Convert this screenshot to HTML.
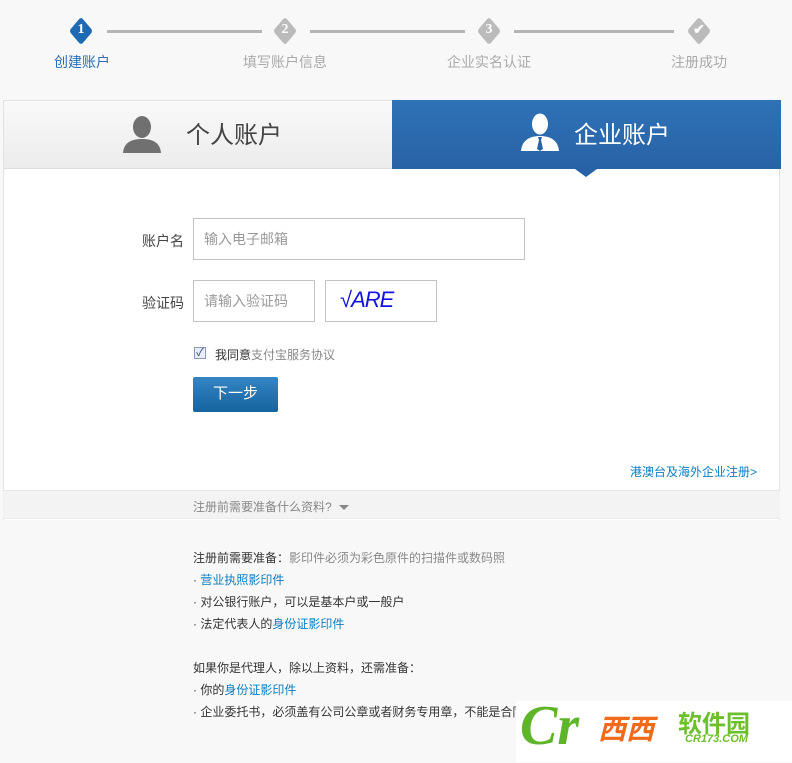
<!DOCTYPE html>
<html><head><meta charset="utf-8"><style>
*{margin:0;padding:0;box-sizing:border-box}
body{width:792px;height:762px;background:#f8f8f8;font-family:"Liberation Sans","Noto Sans CJK SC",sans-serif;position:relative;overflow:hidden;font-size:12px;color:#333}
.abs{position:absolute}
.line{position:absolute;top:30px;height:3px;background:#b5b5b5}
.dia{position:absolute;top:17px;width:28px;height:28px;}
.dia div{position:absolute;left:4px;top:4px;width:20px;height:20px;transform:scaleX(0.85) rotate(45deg);border-radius:3px;background:#bbb}
.dia span{position:absolute;left:0;top:5px;width:28px;text-align:center;color:#fff;font:bold 14px "Liberation Serif",serif}
.lbl{position:absolute;top:52px;font-size:14px;color:#aaa}
.card{position:absolute;left:3px;top:100px;width:777px;height:662px;background:#fff;border:1px solid #e2e2e2;border-bottom:none}
.inp{position:absolute;border:1px solid #c3c3c3;background:#fff;color:#999;font-size:14px;padding-left:10px}
a{color:#0a7cc2;text-decoration:none}
.req div{height:22px;line-height:22px;font-size:12px}
</style></head><body>
<div class="line" style="left:107px;width:155px"></div>
<div class="line" style="left:310px;width:155px"></div>
<div class="line" style="left:514px;width:160px"></div>
<div class="dia" style="left:67px"><div style="background:#1f6bb3"></div><span>1</span></div>
<div class="dia" style="left:271px"><div></div><span>2</span></div>
<div class="dia" style="left:475px"><div></div><span>3</span></div>
<div class="dia" style="left:685px"><div></div><span>✔</span></div>
<div class="lbl" style="left:54px;color:#2a6fb5">创建账户</div>
<div class="lbl" style="left:243px">填写账户信息</div>
<div class="lbl" style="left:447px">企业实名认证</div>
<div class="lbl" style="left:671px">注册成功</div>

<div class="card">
 <div class="abs" style="left:0;top:0;width:389px;height:68px;background:linear-gradient(#f9f9f9,#ececec);border-bottom:1px solid #ddd"></div>
 <svg class="abs" style="left:118px;top:14px" width="40" height="38" viewBox="0 0 40 38"><ellipse cx="20" cy="12" rx="9" ry="11" fill="#707070"/><path d="M1 38 C2 27 10 24 20 24 C30 24 38 27 39 38Z" fill="#707070"/></svg>
 <div class="abs" style="left:182px;top:14px;font-size:24px;color:#444">个人账户</div>
 <div class="abs" style="left:388px;top:-1px;width:389px;height:69px;background:linear-gradient(#2f72b7,#2862a5)"></div>
 <svg class="abs" style="left:516px;top:12px" width="40" height="38" viewBox="0 0 40 38"><ellipse cx="20" cy="11" rx="8" ry="10.5" fill="#fff"/><path d="M1 38 C2 27 10 23 20 23 C30 23 38 27 39 38Z" fill="#fff"/><path d="M18 24 L22 24 L21 27 L23 36 L20 38 L17 36 L19 27Z" fill="#2862a5"/></svg>
 <div class="abs" style="left:570px;top:14px;font-size:24px;color:#fff">企业账户</div>
 <div class="abs" style="left:571px;top:68px;width:0;height:0;border-left:11px solid transparent;border-right:11px solid transparent;border-top:8px solid #2862a5"></div>

 <div class="abs" style="left:138px;top:130px;font-size:14px;color:#444">账户名</div>
 <div class="inp" style="left:189px;top:117px;width:332px;height:42px;line-height:40px">输入电子邮箱</div>
 <div class="abs" style="left:138px;top:192px;font-size:14px;color:#444">验证码</div>
 <div class="inp" style="left:189px;top:179px;width:122px;height:42px;line-height:40px">请输入验证码</div>
 <div class="inp" style="left:321px;top:179px;width:112px;height:42px;padding:0"><span style="position:absolute;left:14px;top:6px;color:#1414e0;font:italic 22px 'Liberation Sans',sans-serif;letter-spacing:-1px">√ARE</span></div>
 <div class="abs" style="left:190px;top:246px;width:12px;height:12px;border:1px solid #8a9ab8;background:#e8ecf3;color:#2a3f8f;font-size:11px;line-height:10px;text-align:center">✓</div>
 <div class="abs" style="left:211px;top:245px;font-size:12px;color:#333">我同意<span style="color:#888">支付宝服务协议</span></div>
 <div class="abs" style="left:189px;top:276px;width:85px;height:35px;background:linear-gradient(#3584c4,#15649e);border-radius:2px;color:#fff;font-size:15px;text-align:center;line-height:34px">下一步</div>
 <div class="abs" style="left:626px;top:362px;font-size:12px"><a>港澳台及海外企业注册&gt;</a></div>

 <div class="abs" style="left:-1px;top:389px;width:777px;height:29px;background:#f3f3f3;border-top:1px solid #e6e6e6;border-bottom:1px solid #ececec"></div>
 <div class="abs" style="left:189px;top:397px;font-size:12px;color:#888">注册前需要准备什么资料? <span style="display:inline-block;width:0;height:0;border-left:5px solid transparent;border-right:5px solid transparent;border-top:5px solid #888;vertical-align:middle;margin-left:4px"></span></div>
 <div class="abs" style="left:-1px;top:419px;width:777px;height:243px;background:#f8f8f8"></div>
 <div class="abs req" style="left:189px;top:446px">
  <div>注册前需要准备：<span style="color:#888">影印件必须为彩色原件的扫描件或数码照</span></div>
  <div>· <a>营业执照影印件</a></div>
  <div>· 对公银行账户，可以是基本户或一般户</div>
  <div>· 法定代表人的<a>身份证影印件</a></div>
  <div>&nbsp;</div>
  <div>如果你是代理人，除以上资料，还需准备：</div>
  <div>· 你的<a>身份证影印件</a></div>
  <div>· 企业委托书，必须盖有公司公章或者财务专用章，不能是合同/业务专用章 <a>查看模板</a></div>
 </div>
</div>
<div class="abs" style="left:516px;top:701px;width:276px;height:61px;background:#fff"></div>
<div class="abs" style="left:520px;top:694px;font:bold 56px 'Liberation Serif',serif;color:#5fb52a;font-style:italic">Cr</div>
<div class="abs" style="left:598px;top:708px;font:bold 28px 'Noto Sans CJK SC',sans-serif;color:#f06a1a;font-style:italic">西西</div>
<div class="abs" style="left:678px;top:704px;font:bold 24px 'Noto Sans CJK SC',sans-serif;color:#6cbf2e">软件园</div>
<div class="abs" style="left:685px;top:733px;font:bold italic 11px 'Liberation Sans',sans-serif;color:#6cbf2e">CR173.COM</div>
</body></html>
